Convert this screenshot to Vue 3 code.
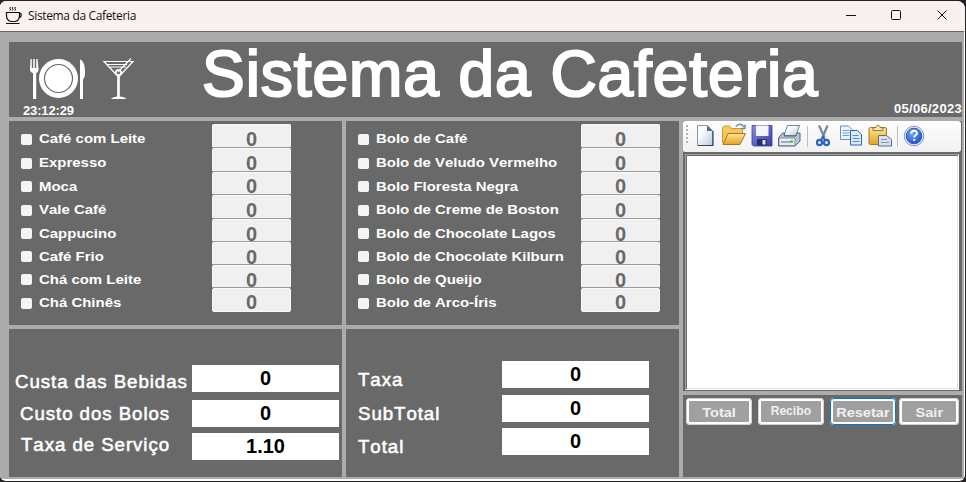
<script setup>
import { ref } from 'vue'

const drinks = ref(['Café com Leite', 'Expresso', 'Moca', 'Vale Café', 'Cappucino', 'Café Frio', 'Chá com Leite', 'Chá Chinês'])
const cakes = ref(['Bolo de Café', 'Bolo de Veludo Vermelho', 'Bolo Floresta Negra', 'Bolo de Creme de Boston', 'Bolo de Chocolate Lagos', 'Bolo de Chocolate Kilburn', 'Bolo de Queijo', 'Bolo de Arco-Íris'])
const costs = [
  { label: 'Custa das Bebidas', value: '0', cls: 'c1' },
  { label: 'Custo dos Bolos', value: '0', cls: 'c2' },
  { label: 'Taxa de Serviço', value: '1.10', cls: 'c3' },
]
const totals = [
  { label: 'Taxa', value: '0', cls: 't1' },
  { label: 'SubTotal', value: '0', cls: 't2' },
  { label: 'Total', value: '0', cls: 't3' },
]
</script>

<template>
  <div class="desktop">
    <div class="window">
      <header class="titlebar">
        <svg class="cup" width="18" height="18" viewBox="0 0 18 18" fill="none" stroke="#111" stroke-width="1.2">
          <path d="M1.5 5.500h13v3.200c0 3.400-2 5.200-4.300 5.800H5.800C3.300 13.700 1.500 12 1.500 8.700zM14.500 6.500h1.200c1.400 1.400 0 4.200-2.200 4.600M1 16.500h13.500" />
          <path d="M5.500 0l-.8 1.500 1 .6-.8 1.500M8 0l-.8 1.500 1 .6-.8 1.500M10.500 0l-.8 1.500 1 .6-.8 1.500" stroke-width="1" />
        </svg>
        <span class="caption">Sistema da Cafeteria</span>
        <svg class="controls" width="102" height="12" viewBox="0 0 102 12" fill="none" stroke="#111" stroke-width="1">
          <path d="M0 6.500h10M91.500 1.500l9 9M100.500 1.500l-9 9" />
          <rect x="45.500" y="1.500" width="9" height="9" rx="1" />
        </svg>
      </header>

      <main class="body">
        <section class="panel banner">
          <div class="left">
            <svg class="pics" width="110" height="44" viewBox="0 0 110 44">
              <g fill="#fff">
                <path d="M1.500 1h1.300v9h1.400V1h1.600v9h1.400V1h1.300l1 10c.2 2.300-1 3.600-2.300 4v26H4V15C2 14.400.8 13 1 11z" />
                <circle cx="29.500" cy="20.500" r="19.500" />
                <path d="M51 1.500c3.500 1 5 6 5 12 0 4.500-.5 6.500-2 8V41h-3z" />
              </g>
              <circle cx="29.500" cy="20.500" r="14" fill="none" stroke="#696969" stroke-width="1.200" />
              <g fill="none" stroke="#fff" stroke-width="1.200">
                <path d="M75 3.500h29L89.500 19zM78 6.500h20M80 9h17M102 .5L89 14" />
                <circle cx="89.500" cy="14.500" r="2.600" stroke-width="1.600" />
                <path d="M89.500 18v21" stroke-width="2.600" />
              </g>
              <path d="M82 41c1-1.700 4-2 6.500-2.500h2C93 39 96.500 39.300 97.500 41z" fill="#fff" />
            </svg>
            <span class="stamp">23:12:29</span>
          </div>
          <h1>Sistema da Cafeteria</h1>
          <span class="stamp date">05/06/2023</span>
        </section>

        <section class="panel menu">
          <div class="names">
            <label v-for="d in drinks" :key="d"><i class="check"></i><span>{{ d }}</span></label>
          </div>
          <div class="amounts"><div v-for="d in drinks" :key="d">0</div></div>
        </section>

        <section class="panel menu cakes">
          <div class="names">
            <label v-for="c in cakes" :key="c"><i class="check"></i><span>{{ c }}</span></label>
          </div>
          <div class="amounts"><div v-for="c in cakes" :key="c">0</div></div>
        </section>

        <section class="panel receipt">
          <div class="toolbar">
            <svg width="278" height="30" viewBox="0 0 278 30">
              <defs>
                <linearGradient id="paper" x1="0" y1="0" x2="1" y2="1"><stop offset=".3" stop-color="#fff" /><stop offset="1" stop-color="#b4cbe0" /></linearGradient>
                <linearGradient id="gold" x1="0" y1="0" x2="0" y2="1"><stop offset="0" stop-color="#ffe391" /><stop offset="1" stop-color="#e3a223" /></linearGradient>
                <linearGradient id="violet" x1="0" y1="0" x2="1" y2="1"><stop offset="0" stop-color="#8a8bea" /><stop offset="1" stop-color="#383aa0" /></linearGradient>
                <radialGradient id="blue" cx=".4" cy=".3" r=".8"><stop offset="0" stop-color="#76a8ff" /><stop offset="1" stop-color="#1747bd" /></radialGradient>
              </defs>
              <g fill="#b4b4b4"><rect x="3" y="4" width="2" height="2" /><rect x="3" y="8" width="2" height="2" /><rect x="3" y="12" width="2" height="2" /><rect x="3" y="16" width="2" height="2" /><rect x="3" y="20" width="2" height="2" /></g>
              <!-- new -->
              <path d="M14.500 4.500h10l5 5v15h-15z" fill="url(#paper)" stroke="#8298ac" />
              <path d="M15 24.500h15V10" fill="none" stroke="#2f4660" stroke-width="1.200" />
              <path d="M24 4.500v5.500h5.500z" fill="#546d88" />
              <!-- open -->
              <path d="M39.500 22V6.500l2-1.500h5l2 2.500h11V12" fill="#f5c75d" stroke="#c79636" />
              <path d="M40 23.500L45 12.500h17.500L57 23.500z" fill="url(#gold)" stroke="#a87520" />
              <path d="M53 5.500c2-3 6-3 8 .5M58 7.500h4V3.500" fill="none" stroke="#6f8ba8" stroke-width="1.400" />
              <!-- save -->
              <path d="M69 4.500h20v20.500H70.500L69 23.500z" fill="url(#violet)" stroke="#3a3ca0" stroke-width=".8" />
              <rect x="73" y="4.500" width="12.500" height="10.500" fill="#f3f5ff" />
              <rect x="74" y="18" width="10" height="6.500" fill="#26306f" /><rect x="79.500" y="19" width="3" height="4.500" fill="#e2e6f6" />
              <!-- print -->
              <path d="M101 14.500l3.500-10h12L113 14.500z" fill="url(#paper)" stroke="#72869a" />
              <path d="M95.500 17l4-5h2l-.5 3h12l1-3h3v8l-5 5H95.500z" fill="#b9c6d5" stroke="#526274" />
              <path d="M96 17h16v7.500H96z" fill="#e8eef5" stroke="#718295" stroke-width=".8" /><path d="M98 21h10" stroke="#5b6e83" /><rect x="107" y="19.500" width="3" height="2" fill="#39b54a" />
              <path d="M124.500 5v21" stroke="#bdbdbd" />
              <!-- cut -->
              <path d="M136 4.500l5.500 12M144.500 4.500l-5 12" stroke="#74879b" stroke-width="2.200" fill="none" />
              <g fill="none" stroke="#2860c4" stroke-width="2.200"><ellipse cx="136.500" cy="21.500" rx="2.500" ry="2.700" /><ellipse cx="143.500" cy="21.500" rx="2.500" ry="2.700" /><path d="M138 19l2-3 2 3" /></g>
              <!-- copy -->
              <path d="M157.500 5h8l4 4v9.500h-12z" fill="#edf5ff" stroke="#6b91c6" /><path d="M159.500 9.500h7M159.500 12h7M159.500 14.500h7" stroke="#6d9cdd" />
              <path d="M167.500 9.500h7l4 4V24h-11z" fill="#dceaff" stroke="#345fa8" /><path d="M169.500 14.500h6M169.500 17.500h7M169.500 20.500h7" stroke="#5189dc" />
              <!-- paste -->
              <rect x="186" y="6.500" width="17.500" height="17" rx="1.500" fill="url(#gold)" stroke="#a9771f" /><path d="M190 9.500V7l3-.5c0-3 4-3 4 0l3 .5v2.500z" fill="#f5e7bd" stroke="#886d35" stroke-width=".9" />
              <path d="M195.500 14.500h8l5 4V25h-13z" fill="#d9e2ec" stroke="#596f8c" /><path d="M198 18.500h6M198 21.500h8" stroke="#8298b3" />
              <path d="M214.500 5v21" stroke="#bdbdbd" />
              <!-- help -->
              <circle cx="231" cy="15" r="9.800" fill="#e7eef9" stroke="#7e9bc9" /><circle cx="231" cy="15" r="7.800" fill="url(#blue)" stroke="#285bc4" />
              <path d="M228.200 12.800c0-4 5.800-4 5.800-.6 0 2-2.800 2.100-2.800 4.300M231.200 18v2" fill="none" stroke="#fff" stroke-width="1.900" />
            </svg>
          </div>
          <div class="paper"></div>
        </section>

        <section class="panel sums">
          <div v-for="c in costs" :key="c.label" class="sum" :class="c.cls"><span>{{ c.label }}</span><b>{{ c.value }}</b></div>
        </section>
        <section class="panel sums totals">
          <div v-for="t in totals" :key="t.label" class="sum" :class="t.cls"><span>{{ t.label }}</span><b>{{ t.value }}</b></div>
        </section>

        <section class="panel actions">
          <button><span>Total</span></button>
          <button class="small"><span>Recibo</span></button>
          <button class="focus"><span>Resetar</span></button>
          <button><span>Sair</span></button>
        </section>
      </main>
    </div>
  </div>
</template>

<style>
body { margin: 0; background: #252224; overflow: hidden; }
</style>

<style scoped>
* { box-sizing: border-box; }
.desktop { width: 966px; height: 482px; padding: 1px 1px 1px 0; background: #252224; font-family: "Liberation Sans", Arial, sans-serif; font-kerning: none; }
.window { width: 965px; height: 480px; background: #fff; border-radius: 6px 8px 6px 6px; overflow: hidden; }
.titlebar { display: flex; align-items: center; height: 30px; padding: 0 17px 0 5px; background: #f9f1f0; }
.cup { margin-top: -1px; }
.caption { margin-left: 5px; font: 12px/16px "Open Sans", "Noto Sans", sans-serif; letter-spacing: -0.35px; color: #111; flex: 1; white-space: nowrap; }
.controls { margin-top: -2px; }
.body { width: 964px; height: 448px; padding: 10px 2px 2px 9px; border-top: 1px solid #646464; background: #ababab; display: grid; grid-template-columns: 333px 333px 279px; gap: 4px; align-items: start; grid-template-rows: 75px 204px 148px; }
.panel { background: #696969; }
.banner { grid-column: 1 / -1; height: 75px; display: flex; color: #fff; }
.left { width: 193px; padding: 16px 0 0 14px; display: flex; flex-direction: column; }
.pics { margin-left: 6px; flex: none; }
.stamp { font-size: 13px; line-height: 14px; font-weight: bold; letter-spacing: -0.15px; white-space: nowrap; }
.left .stamp { margin-top: 2px; }
h1 { margin: 0; width: 640px; font-size: 64px; line-height: 65px; font-weight: normal; letter-spacing: .95px; -webkit-text-stroke: 2.200px #fff; white-space: nowrap; }
.date { margin-left: auto; align-self: flex-end; padding-bottom: 1px; letter-spacing: .3px; }
.menu { height: 204px; display: flex; padding-top: 3px; }
.names, .amounts { display: grid; grid-template-rows: 24px 24px 23px 24px 23px 23px 23px 24px; height: 188px; }
.names { width: 203px; padding-left: 12px; transform: translateY(3px); }
.cakes .names { width: 235px; }
label { display: flex; align-items: center; font-size: 13.300px; line-height: 20px; font-weight: bold; color: #fff; white-space: nowrap; }
label span { transform: scaleX(1.125); transform-origin: 0 50%; }
.check { width: 11px; height: 11px; margin-right: 7px; background: #f4f4f4; border-radius: 2px; }
.amounts { width: 79px; }
.amounts div { background: #f0f0f0; border: 1px solid #fafafa; border-bottom-color: #9b9b9b; border-radius: 2px; color: #696969; font-size: 20px; line-height: 28px; font-weight: bold; text-align: center; }
.amounts div:nth-child(3) { line-height: 27px; }
.amounts div:last-child { border-bottom-color: #fafafa; line-height: 26px; }
.receipt { height: 270px; display: flex; flex-direction: column; align-items: flex-start; }
.toolbar { width: 278px; height: 31px; background: linear-gradient(#fdfdfd, #f1f1f1); border-radius: 2px 3px 3px 2px; }
.toolbar svg { display: block; }
.paper { margin: 2px 0 0 2px; width: 274px; height: 236px; background: #fff; border: 1px solid #a0a0a0; border-color: #a0a0a0 #fff #fff #a0a0a0; box-shadow: inset 1px 1px #696969, inset -1px -1px #e3e3e3; }
.sums { height: 148px; padding: 36px 3px 0 6px; display: flex; flex-direction: column; }
.totals { padding: 32px 30px 0 12px; }
.sum { display: flex; justify-content: space-between; height: 27px; color: #fff; font-size: 18.670px; line-height: 33px; }
.sum span { white-space: nowrap; letter-spacing: .95px; -webkit-text-stroke: .55px #fff; }
.sum b { width: 147px; height: 27px; background: #fff; color: #000; font-size: 20px; line-height: 27px; text-align: center; }
.c2 { margin-top: 8px; line-height: 27px; padding-left: 5px; }
.c3 { margin-top: 6px; line-height: 24px; padding-left: 6px; }
.t1 { line-height: 37px; }
.t2 { margin-top: 7px; line-height: 37px; }
.t3 { margin-top: 6px; line-height: 37px; }
.actions { grid-column: 3; grid-row: 3; height: 82px; align-self: end; padding: 3px; display: grid; grid-template-columns: 66px 66px 66px 60px; column-gap: 6px; }
.actions button { height: 27px; padding: 0; border: 3px solid #fff; outline: 1px solid #d0d0d0; outline-offset: -1px; border-radius: 4px; background: #a0a0a0; color: #f0f0f0; font: bold 13px/23px "Liberation Sans", Arial, sans-serif; }
.actions span { display: inline-block; transform: scaleX(1.12); }
.actions button.small { font-size: 12.500px; line-height: 19px; }
.actions button.small span { transform: scaleX(.97); }
.actions button.focus { outline-color: #0078d7; }
.actions button:last-child { margin-left: -3px; width: 60px; }
</style>
